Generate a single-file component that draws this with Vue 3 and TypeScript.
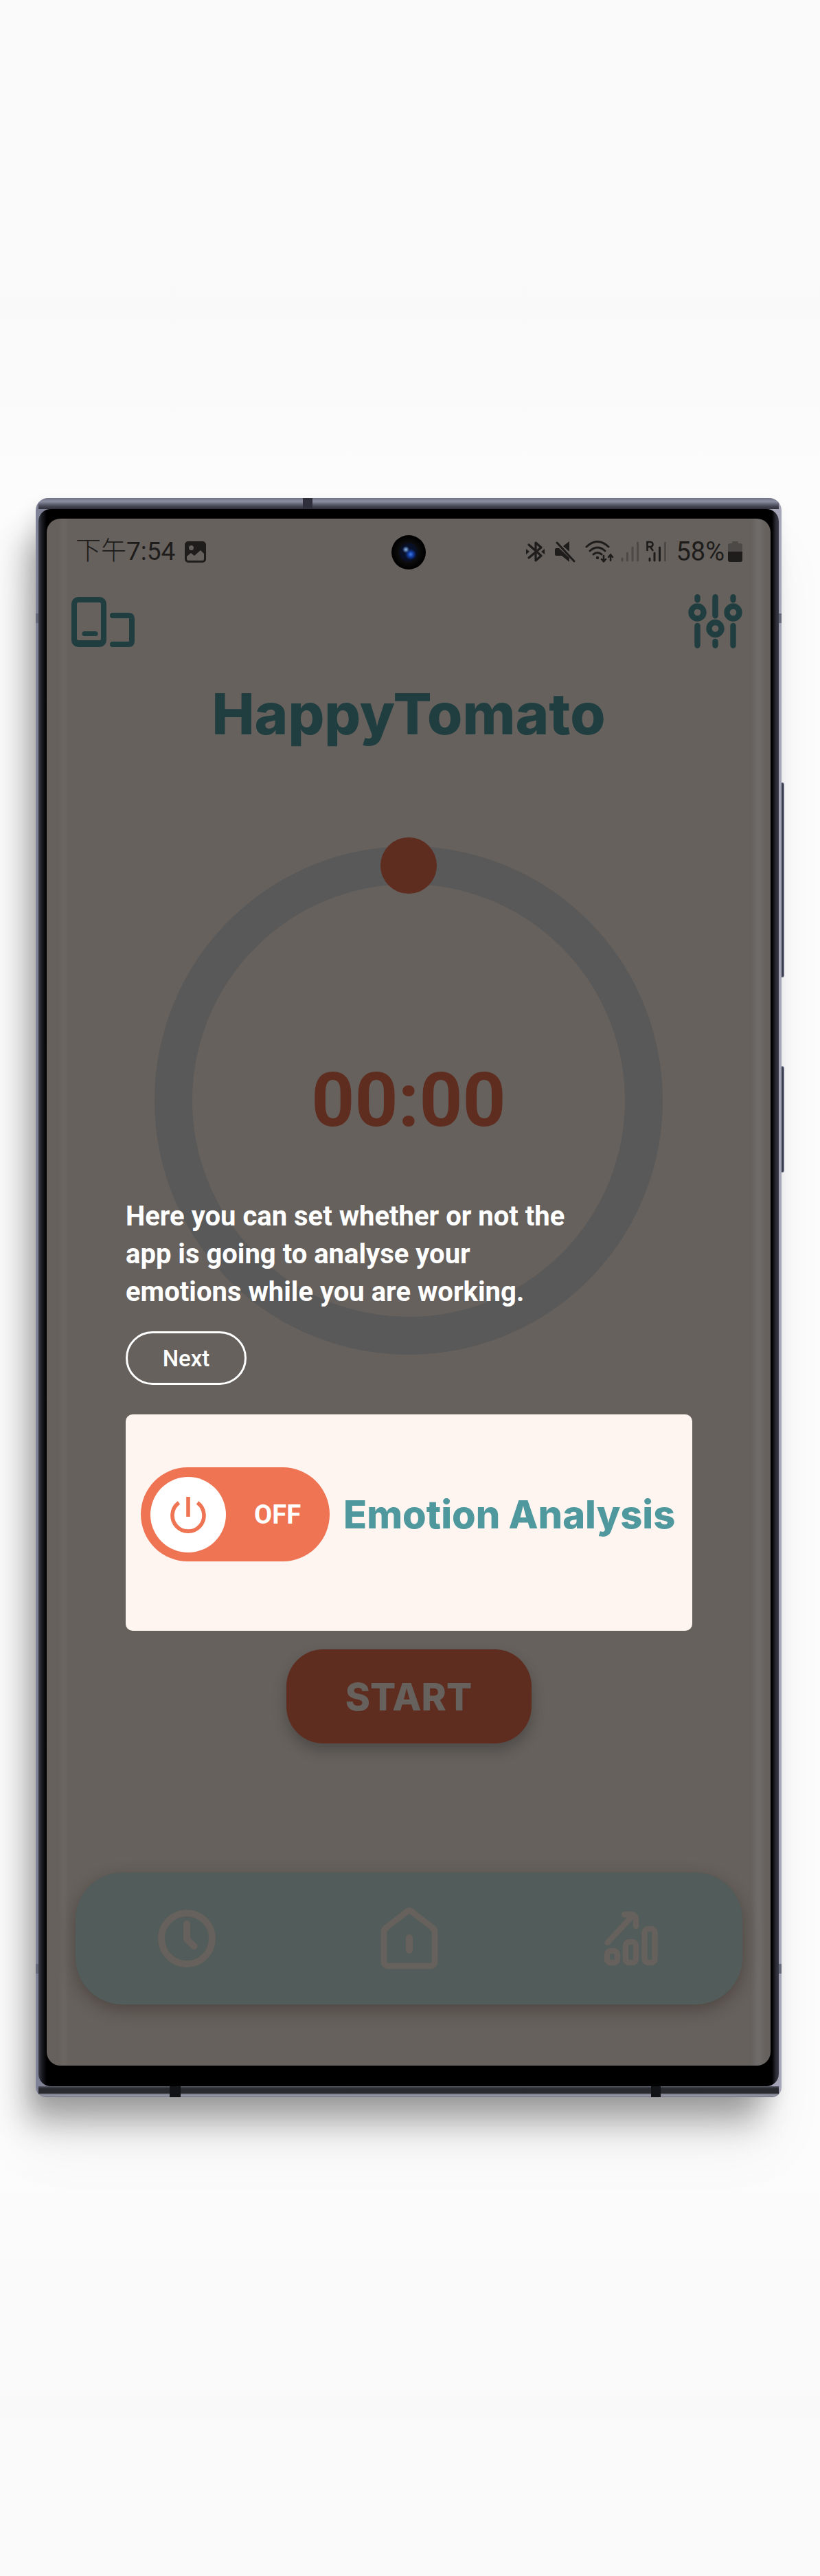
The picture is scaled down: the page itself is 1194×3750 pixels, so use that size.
<script setup lang="ts">
import { computed, ref } from 'vue'

const analysing = ref(false)
const seconds = ref(0)

const clock = computed(() => {
  const two = (n: number): string => String(n).padStart(2, '0')
  return `${two(Math.floor(seconds.value / 60))}:${two(seconds.value % 60)}`
})
</script>

<template>
  <main class="page">
    <div class="phone">
      <span class="side-key volume"></span>
      <span class="side-key power"></span>
      <div class="bezel">
        <div class="screen">
          <header class="status">
            <div class="status-left">
              <span><span class="meridiem">下午</span>7:54</span>
              <svg width="31" height="31" viewBox="0 0 31 31" aria-hidden="true">
                <path fill="#1e1d1c" fill-rule="evenodd" d="M5 0h21a5 5 0 0 1 5 5v21a5 5 0 0 1-5 5H5a5 5 0 0 1-5-5V5a5 5 0 0 1 5-5zM9.500 6a3.500 3.500 0 1 0 0 7 3.500 3.500 0 0 0 0-7zM3 22v4q0 2 2 2h21q2 0 2-2v-8l-5-5-9 8-5-4z" />
              </svg>
            </div>
            <span class="camera"></span>
            <div class="status-right">
              <svg width="32" height="32" viewBox="0 0 32 32" aria-hidden="true">
                <path fill="none" stroke="#1e1d1c" stroke-width="3.200" stroke-linejoin="round" stroke-linecap="round" d="M4 6l18 16-8 7V3l8 7L4 25" />
                <path fill="#1e1d1c" d="M0 12l5 4-5 4zM27 12l-5 4 5 4z" />
              </svg>
              <svg width="34" height="32" viewBox="0 0 34 32" aria-hidden="true">
                <path fill="#1e1d1c" d="M0 13q0-2 2-2h4l15 14v6l-11-9H2q-2 0-2-2zM21 1v15l-9-8z" />
                <path stroke="#1e1d1c" stroke-width="3" stroke-linecap="round" d="M3 3l25 27" />
              </svg>
              <svg width="42" height="32" viewBox="0 0 42 32" aria-hidden="true">
                <g fill="none" stroke="#1e1d1c" stroke-width="3" stroke-linecap="round">
                  <path d="M2 9q16-15 32 0M7 15q11-10 22 0M12 20q6-5 12 0" />
                  <path stroke-width="2.500" d="M27 22v8M24 27l3 3.500 3-3.500M37 29v-8M34 24l3-3.500 3 3.500" />
                </g>
                <circle cx="18" cy="25" r="2.200" fill="#1e1d1c" />
              </svg>
              <svg width="27" height="32" viewBox="0 0 27 32" aria-hidden="true">
                <path stroke="#4c4946" stroke-width="3" stroke-linecap="round" d="M2 26v3M9.500 18v11M17 10v19M24.500 3v26" />
              </svg>
              <svg width="33" height="32" viewBox="0 0 33 32" aria-hidden="true">
                <path fill="none" stroke="#1e1d1c" stroke-width="2.600" d="M1.500 15V2h4q4 0 4 3.500T5.500 9h-4M6 9l4 6" />
                <path stroke="#1e1d1c" stroke-width="3" stroke-linecap="round" d="M5 26v3M12 18v11M19.500 10v19" />
                <path stroke="#4c4946" stroke-width="3" stroke-linecap="round" d="M27.500 3v26" />
              </svg>
              <div class="battery">
                <span>58%</span>
                <svg width="21" height="32" viewBox="0 0 21 32" aria-hidden="true">
                  <path fill="#4c4946" d="M6 3q0-2 2-2h5q2 0 2 2v1h3q3 0 3 3v9H0V7q0-3 3-3h3z" />
                  <path fill="#1e1d1c" d="M0 16h21v12q0 3-3 3H3q-3 0-3-3z" />
                </svg>
              </div>
            </div>
          </header>

          <div class="toolbar">
            <button type="button" class="icon-button" aria-label="Connected devices">
              <svg width="93" height="78" viewBox="0 0 93 78">
                <path fill="#203e40" fill-rule="evenodd" d="M10 3h31a10 10 0 0 1 10 10v53a10 10 0 0 1-10 10H10A10 10 0 0 1 0 66V13A10 10 0 0 1 10 3zM10 11q-2 0-2 2v51q0 2 2 2h31q2 0 2-2V13q0-2-2-2z" />
                <path fill="none" stroke="#203e40" stroke-width="7" stroke-linecap="round" d="M19 56.500h16" />
                <path fill="none" stroke="#203e40" stroke-width="8" stroke-linecap="round" d="M60 30h23q5 0 5 5v32q0 5-5 5H60" />
              </svg>
            </button>
            <button type="button" class="icon-button" aria-label="Settings">
              <svg width="79" height="79" viewBox="0 0 79 79">
                <g fill="none" stroke="#203e40" stroke-width="8.400" stroke-linecap="round">
                  <path d="M13.500 4.200v4M13.500 46v28.500M39.500 4.200v27M39.500 69v5.500M65.500 4.200v4M65.500 46v28.500" />
                  <circle cx="13.500" cy="26.500" r="9" />
                  <circle cx="39.500" cy="50" r="9" />
                  <circle cx="65.500" cy="26.500" r="9" />
                </g>
              </svg>
            </button>
          </div>

          <h1 class="title">HappyTomato</h1>

          <div class="timer">
            <svg class="ring" viewBox="0 0 740 740" aria-hidden="true">
              <circle cx="370" cy="370" r="342.500" fill="none" stroke="#595959" stroke-width="55" />
              <circle cx="370" cy="28" r="41" fill="#5f2d20" />
            </svg>
            <span class="time">{{ clock }}</span>
          </div>

          <section class="spotlight">
            <div class="tip">
              <p>Here you can set whether or not the app is going to analyse your emotions while you are working.</p>
              <button type="button" class="next">Next</button>
            </div>
            <label class="switch" :class="{ on: analysing }">
              <input id="analysis" v-model="analysing" type="checkbox" aria-label="Emotion Analysis" />
              <span class="knob">
                <svg width="52" height="54" viewBox="0 0 52 54" aria-hidden="true">
                  <path fill="none" stroke="#ef7453" stroke-width="5.600" d="M26 1v29M12.500 9.500a23 23 0 1 0 27 0" />
                </svg>
              </span>
              <span class="state">{{ analysing ? 'ON' : 'OFF' }}</span>
            </label>
            <label class="switch-name" for="analysis">Emotion Analysis</label>
          </section>

          <button type="button" class="start">START</button>

          <nav class="tabs">
            <a href="#timer" aria-label="Timer">
              <svg width="92" height="92" viewBox="0 0 92 92">
                <g fill="none" stroke="#66615d" stroke-width="10" stroke-linecap="round" stroke-linejoin="round">
                  <circle cx="46" cy="46" r="37" />
                  <path d="M46 25v22l10.500 10" />
                </g>
              </svg>
            </a>
            <a href="#home" aria-label="Home">
              <svg width="92" height="92" viewBox="0 0 92 92">
                <g fill="none" stroke="#66615d" stroke-width="9" stroke-linecap="round" stroke-linejoin="round">
                  <path d="M43 6.500q3-3 6 0l31 24q3 2.500 3 6V79q0 7-7 7H16q-7 0-7-7V36.500q0-3.500 3-6z" />
                  <path stroke-width="10" d="M46 45v18" />
                </g>
              </svg>
            </a>
            <a href="#statistics" aria-label="Statistics">
              <svg width="92" height="92" viewBox="0 0 92 92">
                <g fill="none" stroke="#66615d" stroke-width="8.400" stroke-linecap="round" stroke-linejoin="round">
                  <path d="M11.500 52L49 12M36 11h10q7 0 7 7v10" />
                  <rect x="11" y="64" width="15" height="17" rx="5" />
                  <rect x="38" y="51" width="15" height="30" rx="5" />
                  <rect x="65.500" y="32" width="15" height="49" rx="5" />
                </g>
              </svg>
            </a>
          </nav>
        </div>
      </div>
    </div>
  </main>
</template>

<style>
body {
  margin: 0;
  background: #fafafa;
}
</style>

<style scoped>
* {
  box-sizing: border-box;
}

.page {
  padding: 725px 56px 697px 52px;
  overflow: hidden;
  background: linear-gradient(#fafafa 0, #f9f9f9 460px, #fcfcfc 720px, #fcfcfc 3100px, #f9f9f9 3500px, #fafafa 100%);
  font-family: Roboto, 'Noto Sans CJK TC', sans-serif;
}

button {
  margin: 0;
  border: 0;
  background: none;
  font-family: inherit;
  cursor: pointer;
}

svg {
  display: block;
}

/* Handset body: metal rails, with antenna bands cut through them */
.phone {
  position: relative;
  padding: 16px 4px;
  border-radius: 18px 18px 14px 14px;
  background:
    linear-gradient(#2e2f3a, #2e2f3a) 389px 0 / 14px 16px no-repeat,
    linear-gradient(#121316, #121316) 195px 100% / 16px 16px no-repeat,
    linear-gradient(#121316, #121316) calc(100% - 176px) 100% / 14px 16px no-repeat,
    linear-gradient(#656879, #656879) 0 168px / 100% 14px no-repeat,
    linear-gradient(#656879, #656879) 0 calc(100% - 180px) / 100% 14px no-repeat,
    linear-gradient(#6f7284, #8c8ea2 5px, #6c6e80 8px, #444653 12px, #30313b 16px) 50% 0 / calc(100% - 8px) 16px no-repeat,
    linear-gradient(#5b5d6b, #2a2b30 3px, #28292e 10px, #8f91a0 12px, #8f91a0 14px, #70727f) 50% 100% / calc(100% - 8px) 16px no-repeat,
    linear-gradient(90deg, #7f8296, #8689a0 50%, #a5a5b8);
  box-shadow:
    -6px 10px 24px rgba(0, 0, 0, 0.08),
    -22px 46px 46px -10px rgba(0, 0, 0, 0.3),
    -14px 70px 90px rgba(0, 0, 0, 0.06);
}

.side-key {
  position: absolute;
  left: 100%;
  width: 4px;
  border: 1px solid #8c8ea4;
  border-left: 0;
  border-radius: 0 3px 3px 0;
  background: #3c3f4d;
}

.volume {
  top: 414px;
  height: 284px;
}

.power {
  top: 827px;
  height: 155px;
}

.bezel {
  padding: 14px 12px 30px;
  border-radius: 18px;
  background: linear-gradient(90deg, #3a3c46, #15161b 6px, #000 12px, #000 calc(100% - 10px), #2c2c36 calc(100% - 4px), #3a3a46);
}

.screen {
  position: relative;
  display: flex;
  flex-direction: column;
  padding-bottom: 89px;
  border-radius: 20px;
  background:
    linear-gradient(90deg, transparent 18px, #6a6561 23px, #6a6561 27px, transparent 32px),
    linear-gradient(270deg, transparent 6px, #6e6b69 16px, #6e6b69 19px, transparent 28px),
    #66615d;
}

.status {
  position: relative;
  display: flex;
  align-items: center;
  justify-content: space-between;
  height: 96px;
  padding: 0 41px 0 42px;
  color: #1e1d1c;
  font-size: 38px;
  line-height: 44px;
}

.status-left {
  display: flex;
  align-items: center;
  gap: 14px;
  font-size: 37px;
}

.meridiem {
  font-weight: 300;
}

.status-right {
  display: flex;
  align-items: center;
  gap: 10px;
}

.battery {
  display: flex;
  align-items: center;
  gap: 5px;
}

.camera {
  position: absolute;
  top: 24px;
  left: calc(50% - 25px);
  width: 50px;
  height: 50px;
  border-radius: 50%;
  background:
    radial-gradient(circle at 21px 21px, #9cc0e8 0, rgba(90, 130, 190, 0.6) 3px, transparent 5px),
    radial-gradient(circle at 28px 28px, #3f7be8 0, #123a9c 4px, transparent 8px),
    radial-gradient(circle, #0a1430 0, #081026 12px, #0c0c0c 15px, #000 24px);
}

.toolbar {
  display: flex;
  justify-content: space-between;
  padding: 14px 41px 0 36px;
}

.icon-button {
  padding: 0;
}

.title {
  margin: 45px 0 0;
  color: #203e40;
  font: 800 83px/100px Inter, sans-serif;
  text-align: center;
}

.timer {
  display: grid;
  place-items: center;
  width: 740px;
  max-width: 100%;
  margin: 143px auto 0;
}

.ring,
.time {
  grid-area: 1 / 1;
}

.ring {
  width: 100%;
  overflow: visible;
}

.time {
  color: #5f2d20;
  font-size: 110px;
  font-weight: 700;
  line-height: 120px;
}

/* Highlighted control of the walkthrough; its tip floats above the timer */
.spotlight {
  position: relative;
  display: flex;
  align-items: center;
  gap: 20px;
  margin: 87px 114px 0 115px;
  padding: 77px 22px 101px;
  border-radius: 10px;
  background: #fef5f0;
}

.tip {
  position: absolute;
  bottom: calc(100% + 43px);
  left: 0;
  width: 660px;
  color: #fff;
}

.tip p {
  margin: 0 0 30px;
  font-size: 40px;
  font-weight: 700;
  line-height: 55px;
}

.next {
  width: 176px;
  height: 78px;
  border: 3px solid #fff;
  border-radius: 39px;
  color: #fff;
  font-size: 33px;
  font-weight: 500;
}

.switch {
  position: relative;
  display: flex;
  flex: none;
  align-items: center;
  justify-content: space-between;
  width: 275px;
  height: 137px;
  padding: 0 42px 0 14px;
  border-radius: 69px;
  background: #ef7453;
  cursor: pointer;
}

.switch.on {
  flex-direction: row-reverse;
  padding: 0 14px 0 42px;
}

.switch input {
  position: absolute;
  inset: 0;
  width: 100%;
  height: 100%;
  margin: 0;
  opacity: 0;
}

.knob {
  display: grid;
  place-items: center;
  width: 110px;
  height: 110px;
  border-radius: 50%;
  background: #fff;
}

.state {
  color: #fff;
  font-size: 38px;
  font-weight: 700;
}

.switch-name {
  color: #4f989d;
  font: 800 56px/66px Inter, sans-serif;
  white-space: nowrap;
}

.start {
  align-self: center;
  width: 357px;
  height: 137px;
  margin-top: 27px;
  border-radius: 54px;
  background: #5f2d20;
  box-shadow: 0 10px 20px rgba(0, 0, 0, 0.24);
  color: #66615d;
  font: 800 55px/66px Inter, sans-serif;
}

.tabs {
  display: flex;
  height: 192px;
  margin: 188px 41px 0 42px;
  border-radius: 68px;
  background: #525c5a;
  box-shadow: 0 8px 22px rgba(40, 25, 20, 0.36);
}

.tabs a {
  display: grid;
  flex: 1;
  place-items: center;
}
</style>
